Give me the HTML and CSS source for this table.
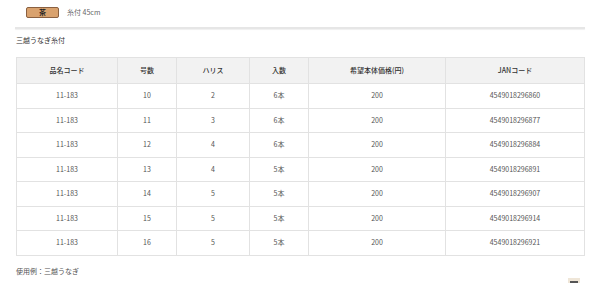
FILE: index.html
```html
<!DOCTYPE html>
<html lang="ja">
<head>
<meta charset="utf-8">
<link rel="stylesheet" href="styles.css">
</head>
<body>
<div class="page">
  <div class="variant">
    <span class="badge">茶</span>
    <span class="variant-text">糸付 45cm</span>
  </div>
  <div class="sep"></div>
  <p class="title">三越うなぎ糸付</p>
  <table class="spec">
    <colgroup>
      <col style="width:101px"><col style="width:59px"><col style="width:73px"><col style="width:59px"><col style="width:137px"><col>
    </colgroup>
    <thead>
      <tr><th>品名コード</th><th>号数</th><th>ハリス</th><th>入数</th><th>希望本体価格(円)</th><th>JANコード</th></tr>
    </thead>
    <tbody>
      <tr><td>11-183</td><td>10</td><td>2</td><td>6本</td><td>200</td><td>4549018296860</td></tr>
      <tr><td>11-183</td><td>11</td><td>3</td><td>6本</td><td>200</td><td>4549018296877</td></tr>
      <tr><td>11-183</td><td>12</td><td>4</td><td>6本</td><td>200</td><td>4549018296884</td></tr>
      <tr><td>11-183</td><td>13</td><td>4</td><td>5本</td><td>200</td><td>4549018296891</td></tr>
      <tr><td>11-183</td><td>14</td><td>5</td><td>5本</td><td>200</td><td>4549018296907</td></tr>
      <tr><td>11-183</td><td>15</td><td>5</td><td>5本</td><td>200</td><td>4549018296914</td></tr>
      <tr><td>11-183</td><td>16</td><td>5</td><td>5本</td><td>200</td><td>4549018296921</td></tr>
    </tbody>
  </table>
  <p class="usage">使用例：三越うなぎ</p>
</div>
<div class="pagetop"></div>
</body>
</html>
```
FILE: styles.css
```css
html, body {
  margin: 0;
  padding: 0;
  background: #fff;
}
body {
  font-family: "Noto Sans CJK JP", "Noto Sans", sans-serif;
  font-size: 7px;
  color: #444;
  overflow: hidden;
  height: 283px;
  position: relative;
}
.page {
  padding: 7px 16px 0 16px;
}
.variant {
  display: flex;
  align-items: center;
  gap: 8px;
  height: 11px;
  padding-left: 10px;
}
.badge {
  display: inline-flex;
  align-items: center;
  justify-content: center;
  width: 31px;
  height: 9px;
  background: #d9a26e;
  border: 1px solid #8a6040;
  border-radius: 2px;
  font-weight: bold;
  color: #222;
  font-size: 7px;
  line-height: 1;
}
.variant-text {
  color: #666;
  line-height: 1;
}
.sep {
  margin: 9px -1px 0 -1px;
  height: 2px;
  background: #e6e6e6;
  box-shadow: 0 1px 1px #f0f0f0;
}
.title {
  margin: 6px 0 0 0;
  line-height: 10px;
  color: #333;
}
.spec {
  margin-top: 12px;
  width: 569px;
  border-collapse: collapse;
  table-layout: fixed;
}
.spec th, .spec td {
  border: 1px solid #e2e2e2;
  text-align: center;
  padding: 0;
  font-weight: normal;
  line-height: 1;
}
.spec th {
  background: #f2f2f2;
  height: 25px;
  color: #333;
  font-weight: 500;
}
.spec td {
  height: 23.5px;
  color: #555;
}
.usage {
  margin: 10px 0 0 0;
  line-height: 10px;
  color: #555;
}
.pagetop {
  position: absolute;
  left: 568px;
  top: 277px;
  width: 12px;
  height: 8px;
  background: #efe6d8;
  border-top: 1px solid #fff;
}
.pagetop::after {
  content: "";
  position: absolute;
  left: 2px;
  top: 3px;
  width: 8px;
  height: 2px;
  background: #555;
}
```
